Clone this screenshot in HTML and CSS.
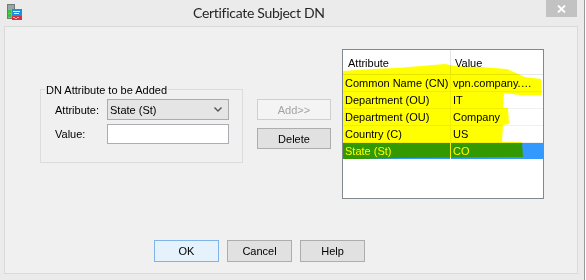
FILE: index.html
```html
<!DOCTYPE html>
<html lang="en">
<head>
    <meta charset="UTF-8">
    <meta name="viewport" content="width=device-width, initial-scale=1.0">
    <title>Certificate Subject DN</title>
    <link rel="stylesheet" href="styles.css">
</head>
<body>
    <div class="screen">
        <div class="window">
            <div class="titlebar">
                <svg class="app-icon" width="15" height="16" viewBox="0 0 15 16">
                    <rect x="0" y="0" width="8" height="15" fill="#6f7b7b"/>
                    <rect x="1" y="1" width="6" height="13" fill="#9aa6a6"/>
                    <rect x="1" y="6" width="3" height="3" fill="#3fbf3f"/>
                    <rect x="1" y="10" width="3" height="3" fill="#3fbf3f"/>
                    <rect x="5" y="5" width="10" height="7" fill="#1f8fd6"/>
                    <rect x="6" y="7" width="7" height="1" fill="#e8f6ff"/>
                    <rect x="7" y="9" width="5" height="1" fill="#e8f6ff"/>
                    <rect x="5" y="12" width="10" height="4" fill="#d83040"/>
                    <rect x="6" y="13" width="2" height="1" fill="#f7b0b8"/>
                    <rect x="10" y="13" width="2" height="1" fill="#f7b0b8"/>
                    <rect x="8" y="14" width="2" height="1" fill="#f7b0b8"/>
                </svg>
                <span class="title">Certificate Subject DN</span>
                <span class="close">
                    <svg width="9" height="8" viewBox="0 0 9 8">
                        <path d="M1 0.5 L8 7.5 M8 0.5 L1 7.5" stroke="#fff" stroke-width="1.8"/>
                    </svg>
                </span>
            </div>

            <div class="client">
                <div class="panel">
                    <div class="main">
                        <div class="group">
                            <span class="group-title">DN Attribute to be Added</span>
                            <div class="field">
                                <label>Attribute:</label>
                                <div class="select">
                                    <span>State (St)</span>
                                    <svg width="8" height="5" viewBox="0 0 8 5">
                                        <path d="M0.5 0.5 L4 4 L7.5 0.5" fill="none" stroke="#555" stroke-width="1.4"/>
                                    </svg>
                                </div>
                            </div>
                            <div class="field field-value">
                                <label>Value:</label>
                                <input type="text" class="text-input">
                            </div>
                        </div>

                        <div class="actions">
                            <button class="btn btn-disabled">Add&gt;&gt;</button>
                            <button class="btn">Delete</button>
                        </div>

                        <div class="list">
                            <table>
                                <thead>
                                    <tr><th>Attribute</th><th>Value</th></tr>
                                </thead>
                                <tbody>
                                    <tr><td>Common Name (CN)</td><td>vpn.company.com</td></tr>
                                    <tr><td>Department (OU)</td><td>IT</td></tr>
                                    <tr><td>Department (OU)</td><td>Company</td></tr>
                                    <tr><td>Country (C)</td><td>US</td></tr>
                                    <tr class="selected"><td>State (St)</td><td>CO</td></tr>
                                </tbody>
                            </table>
                            <!-- marker scribble drawn over the list -->
                            <svg class="marks" width="202" height="150" viewBox="0 0 202 150">
                                <polygon fill="#ffff00" points="1,22 30,20 55,19 103,15 113,17 138,18 165,20 174,24 183,28 199,30 200,46 178,46 162,44 161,59 166,59 167,75 161,76 160,93 180,93 181,108 60,109 20,110 1,110"/>
                            </svg>
                        </div>
                    </div>

                    <div class="footer">
                        <button class="btn btn-default">OK</button>
                        <button class="btn">Cancel</button>
                        <button class="btn">Help</button>
                    </div>
                </div>
            </div>
        </div>
        <div class="edge"></div>
    </div>
</body>
</html>
```

FILE: styles.css
```css
body {
    margin: 0;
    background: #fff;
    font-family: 'Liberation Sans', Arial, sans-serif;
    font-size: 11px;
    color: #000;
}

.screen {
    display: flex;
    height: 280px;
    overflow: hidden;
}

.window {
    width: 584px;
    background: #ebebeb;
    display: flex;
    flex-direction: column;
}

.edge {
    width: 1px;
    background: #9a9a9a;
}

/* title bar */
.titlebar {
    height: 26px;
    display: flex;
    align-items: flex-start;
}

.app-icon {
    margin: 4px 0 0 7px;
}

.title {
    margin-left: 171px;
    font-family: 'Lato', sans-serif;
    font-size: 14px;
    letter-spacing: -0.3px;
    line-height: 25px;
    color: #262626;
}

.close {
    margin-left: auto;
    margin-right: 7px;
    width: 31px;
    height: 17px;
    background: #c2c2c2;
    display: flex;
    align-items: center;
    justify-content: center;
}

/* dialog body */
.client {
    padding: 0 6px 6px 4px;
}

.panel {
    height: 248px;
    box-sizing: border-box;
    border: 1px solid #dadada;
    background: #f0f0f0;
}

.main {
    display: flex;
    align-items: flex-start;
    padding: 22px 0 0 35px;
}

.group {
    margin-top: 40px;
    width: 203px;
    height: 74px;
    box-sizing: border-box;
    border: 1px solid #dcdcdc;
}

.group-title {
    display: block;
    width: fit-content;
    margin: -7px 0 0 4px;
    padding: 0 1px;
    line-height: 14px;
    background: #f0f0f0;
}

.field {
    display: flex;
    align-items: center;
    margin-top: 2px;
    padding-left: 14px;
}

.field-value {
    margin-top: 4px;
}

.field label {
    width: 52px;
}

.select {
    width: 122px;
    height: 21px;
    box-sizing: border-box;
    border: 1px solid #acacac;
    background: #e5e5e5;
    display: flex;
    align-items: center;
    justify-content: space-between;
    padding: 0 6px 0 2px;
}

.text-input {
    width: 122px;
    height: 20px;
    box-sizing: border-box;
    margin: 0;
    border: 1px solid #abadb3;
    background: #fff;
    font: inherit;
}

.actions {
    display: flex;
    flex-direction: column;
    gap: 8px;
    margin: 50px 0 0 14px;
}

.btn {
    width: 74px;
    height: 21px;
    margin: 0;
    padding: 0;
    box-sizing: border-box;
    border: 1px solid #adadad;
    background: #e1e1e1;
    font-family: inherit;
    font-size: 11px;
    color: #000;
}

.btn-disabled {
    border-color: #cfcfcf;
    background: #f4f4f4;
    color: #a3a3a3;
}

.btn-default {
    border-color: #7eb4ea;
    background: #e5f1fb;
}

/* list view */
.list {
    position: relative;
    margin-left: 11px;
    width: 202px;
    height: 150px;
    box-sizing: border-box;
    border: 1px solid #828790;
    background: #fff;
}

.list table {
    width: 100%;
    border-collapse: separate;
    border-spacing: 0;
    table-layout: fixed;
}

.list th,
.list td {
    box-sizing: border-box;
    white-space: nowrap;
    overflow: hidden;
    text-overflow: ellipsis;
    text-align: left;
    font-weight: normal;
}

.list th {
    height: 25px;
    padding: 1px 0 0 4px;
    border-bottom: 1px solid #e5e5e5;
}

.list th:first-child {
    width: 108px;
    padding-left: 5px;
    border-right: 1px solid #e5e5e5;
}

.list td {
    height: 17px;
    padding: 0 8px 0 2px;
    border-bottom: 1px solid #f0f0f0;
}

.list td:first-child {
    padding-right: 0;
    border-right: 1px solid #f0f0f0;
}

.list tr.selected td {
    background: #3399ff;
    color: #fff;
    border-bottom-color: #fff;
}

.marks {
    position: absolute;
    left: -1px;
    top: -1px;
    pointer-events: none;
    mix-blend-mode: multiply;
}

.footer {
    display: flex;
    gap: 8px;
    margin-top: 41px;
    padding-left: 149px;
}

.footer .btn {
    width: 65px;
    height: 22px;
}
```
